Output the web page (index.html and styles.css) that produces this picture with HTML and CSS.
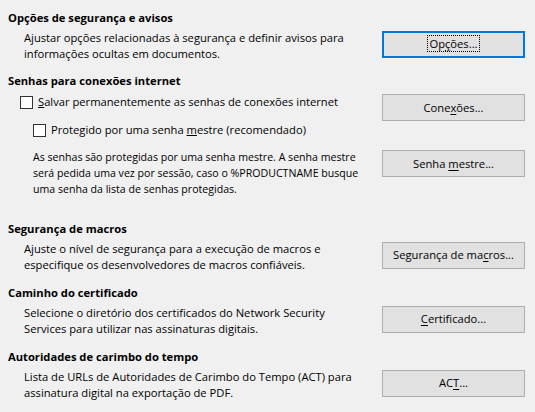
FILE: index.html
```html
<!DOCTYPE html>
<html lang="pt">
<head>
<meta charset="utf-8">
<link rel="stylesheet" href="styles.css">
</head>
<body>
<div class="page">
  <section class="sec">
    <h2 class="head">Opções de segurança e avisos</h2>
    <div class="row">
      <p class="desc">Ajustar opções relacionadas à segurança e definir avisos para<br>informações ocultas em documentos.</p>
      <button class="btn focus"><span class="focusring">Op<u>ç</u>ões...</span></button>
    </div>
  </section>

  <section class="sec s2">
    <h2 class="head">Senhas para conexões internet</h2>
    <div class="row top">
      <div class="checks">
        <label class="check"><span class="box"></span><span><u>S</u>alvar permanentemente as senhas de conexões internet</span></label>
        <label class="check sub"><span class="box"></span><span>Protegido por uma senha <u>m</u>estre (recomendado)</span></label>
      </div>
      <button class="btn b-conn">Cone<u>x</u>ões...</button>
    </div>
    <div class="row top">
      <p class="note">As senhas são protegidas por uma senha mestre. A senha mestre<br>será pedida uma vez por sessão, caso o %PRODUCTNAME busque<br>uma senha da lista de senhas protegidas.</p>
      <button class="btn b-master">Senha <u>m</u>estre...</button>
    </div>
  </section>

  <section class="sec s3">
    <h2 class="head">Segurança de macros</h2>
    <div class="row">
      <p class="desc">Ajuste o nível de segurança para a execução de macros e<br>especifique os desenvolvedores de macros confiáveis.</p>
      <button class="btn">Segurança de ma<u>c</u>ros...</button>
    </div>
  </section>

  <section class="sec s4">
    <h2 class="head">Caminho do certificado</h2>
    <div class="row">
      <p class="desc">Selecione o diretório dos certificados do Network Security<br>Services para utilizar nas assinaturas digitais.</p>
      <button class="btn"><u>C</u>ertificado...</button>
    </div>
  </section>

  <section class="sec s5">
    <h2 class="head">Autoridades de carimbo do tempo</h2>
    <div class="row">
      <p class="desc">Lista de URLs de Autoridades de Carimbo do Tempo (ACT) para<br>assinatura digital na exportação de PDF.</p>
      <button class="btn">AC<u>T</u>...</button>
    </div>
  </section>
</div>
</body>
</html>
```

FILE: styles.css
```css
html, body {
  margin: 0;
  padding: 0;
  background: #f0f0f0;
}
body {
  width: 535px;
  height: 412px;
  overflow: hidden;
  font-family: "Open Sans", "Noto Sans", sans-serif;
  font-size: 11.2px;
  color: #000;
}
.page {
  padding: 10px 10px 0 8px;
}
.sec {
  margin: 0;
}
.head {
  margin: 0;
  font-size: 11.2px;
  font-weight: bold;
  line-height: 16px;
  height: 16px;
}
.row {
  display: grid;
  grid-template-columns: 1fr 143px;
  align-items: center;
}
.row.top {
  align-items: start;
}
.desc {
  margin: 4px 0 0 16px;
  line-height: 16px;
  white-space: nowrap;
}
.btn {
  font: inherit;
  color: #000;
  height: 27px;
  width: 143px;
  background: #e1e1e1;
  border: 1px solid #adadad;
  padding: 0;
  margin: 0;
  box-sizing: border-box;
  line-height: 16px;
}
.btn u {
  text-decoration-thickness: 1px;
  text-underline-offset: 2px;
}
.btn.focus {
  border: 2px solid #0078d7;
}
.focusring {
  outline: 1px dotted #000;
  outline-offset: 0;
  padding: 0 1px;
}
.s2 {
  margin-top: 11px;
}
.checks {
  display: flex;
  flex-direction: column;
  gap: 10px;
  margin-top: 4px;
}
.check {
  display: flex;
  align-items: center;
  gap: 5px;
  line-height: 18px;
  white-space: nowrap;
  margin-left: 12px;
}
.check.sub {
  margin-left: 25px;
}
.box {
  width: 11px;
  height: 11px;
  border: 1px solid #333;
  background: #fff;
  flex: none;
}
.b-conn {
  margin-top: 5px;
}
.note {
  margin: 10px 0 0 25px;
  font-size: 10.6px;
  line-height: 16px;
  white-space: nowrap;
}
.b-master {
  margin-top: 11px;
}
.s3 {
  margin-top: 24px;
}
.s4 {
  margin-top: 12px;
}
.s5 {
  margin-top: 12px;
}
```
